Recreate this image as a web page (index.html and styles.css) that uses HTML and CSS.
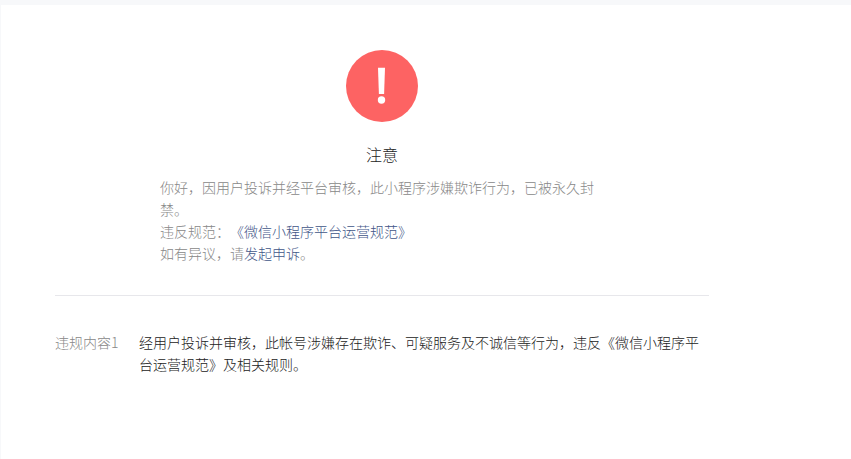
FILE: index.html
```html
<!DOCTYPE html>
<html lang="zh-CN">
<head>
  <meta charset="UTF-8">
  <title>注意</title>
  <link rel="stylesheet" href="styles.css">
</head>
<body>
  <div class="page">
    <div class="notice">
      <div class="icon-warn">
        <svg width="72" height="72" viewBox="0 0 72 72">
          <circle cx="36" cy="36" r="36" fill="#fd6363"/>
          <path d="M32 17.700h7l-.9 26.300h-5.200z" fill="#fff"/>
          <circle cx="35.500" cy="50" r="3.700" fill="#fff"/>
        </svg>
      </div>
      <h2 class="notice-title">注意</h2>
      <div class="notice-text">
        <p>你好，因用户投诉并经平台审核，此小程序涉嫌欺诈行为，已被永久封禁。</p>
        <p>违反规范：<a href="#">《微信小程序平台运营规范》</a></p>
        <p>如有异议，请<a href="#">发起申诉</a>。</p>
      </div>
    </div>
    <dl class="detail">
      <dt>违规内容1</dt>
      <dd>经用户投诉并审核，此帐号涉嫌存在欺诈、可疑服务及不诚信等行为，违反《微信小程序平台运营规范》及相关规则。</dd>
    </dl>
  </div>
</body>
</html>
```

FILE: styles.css
```css
html, body {
  margin: 0;
  padding: 0;
}

body {
  background: #f7f8fa;
  font-family: "Noto Sans CJK SC", sans-serif;
  font-size: 14px;
  font-weight: 300;
  line-height: 22px;
  text-spacing-trim: space-all;
  font-kerning: none;
  height: 459px;
  overflow: hidden;
}

.page {
  margin: 5px 0 0 1px;
  height: 454px;
  background: #fff;
  padding: 45px 0 0 54px;
  box-sizing: border-box;
}

.notice {
  width: 654px;
  padding-bottom: 31px;
  border-bottom: 1px solid #e7e7eb;
}

.icon-warn {
  width: 72px;
  height: 72px;
  margin: 0 auto;
  font-size: 0;
}

.notice-title {
  margin: 20px 0 0;
  font-size: 16px;
  line-height: 24px;
  font-weight: 300;
  color: #222;
  text-align: center;
}

.notice-text {
  width: 448px;
  margin: 10px 0 0 105px;
  color: #888;
}

.notice-text p {
  margin: 0;
  line-height: 22px;
}

.notice-text a {
  color: #3f5688;
  text-decoration: none;
}

.detail {
  display: flex;
  width: 654px;
  margin: 35px 0 0;
}

.detail dt {
  width: 84px;
  flex: none;
  color: #888;
  line-height: 22px;
}

.detail dd {
  margin: 0;
  flex: 1;
  color: #222;
  line-height: 22px;
}
```
